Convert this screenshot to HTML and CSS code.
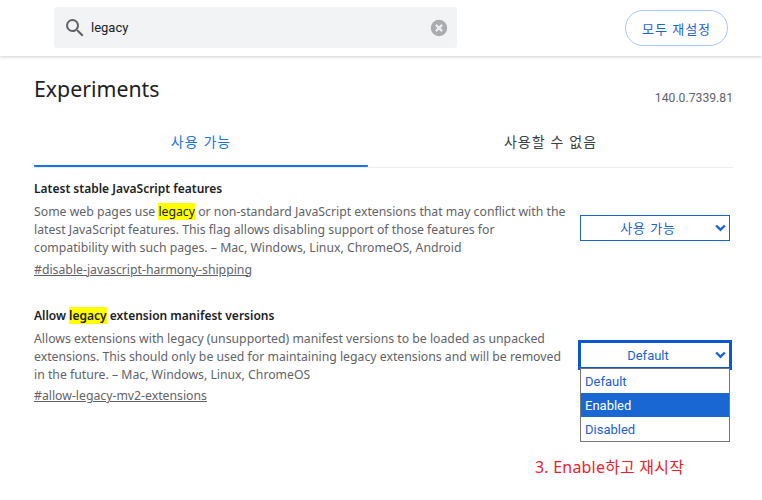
FILE: index.html
```html
<!DOCTYPE html>
<html lang="ko">
<head>
<meta charset="utf-8">
<title>Experiments</title>
<link rel="stylesheet" href="styles.css">
</head>
<body>
<header class="top">
  <div class="search">
    <svg class="search-icon" width="24" height="24" viewBox="0 0 24 24"><path d="M15.5 14h-.79l-.28-.27A6.47 6.47 0 0 0 16 9.5 6.5 6.5 0 1 0 9.5 16c1.61 0 3.09-.59 4.23-1.57l.27.28v.79l5 4.99L20.49 19l-4.99-5zm-6 0C7.01 14 5 11.99 5 9.5S7.01 5 9.5 5 14 7.01 14 9.5 11.99 14 9.5 14z"/></svg>
    <span class="search-text">legacy</span>
    <svg class="clear-icon" width="18" height="18" viewBox="0 0 18 18"><circle cx="9" cy="9" r="8.2"/><path d="M5.9 5.9l6.2 6.2M12.1 5.9l-6.2 6.2"/></svg>
  </div>
  <button class="reset">모두 재설정</button>
</header>
<main class="content">
  <div class="title-row">
    <h1 class="title">Experiments</h1>
    <span class="version">140.0.7339.81</span>
  </div>
  <div class="tabs">
    <div class="tab active">사용 가능</div>
    <div class="tab">사용할 수 없음</div>
  </div>
  <section class="exp exp-first">
    <div class="exp-text">
      <h2 class="exp-name">Latest stable JavaScript features</h2>
      <p class="exp-desc">Some web pages use <mark>legacy</mark> or non-standard JavaScript extensions that may conflict with the latest JavaScript features. This flag allows disabling support of those features for compatibility with such pages. – Mac, Windows, Linux, ChromeOS, Android</p>
      <a class="exp-link">#disable-javascript-harmony-shipping</a>
    </div>
    <div class="select-wrap">
      <div class="select">
        <span>사용 가능</span>
        <svg class="chev" width="11" height="8" viewBox="0 0 11 8"><path d="M1.2 1.5L5.5 5.8l4.3-4.3"/></svg>
      </div>
    </div>
  </section>
  <section class="exp exp-second">
    <div class="exp-text">
      <h2 class="exp-name">Allow <mark>legacy</mark> extension manifest versions</h2>
      <p class="exp-desc">Allows extensions with legacy (unsupported) manifest versions to be loaded as unpacked extensions. This should only be used for maintaining legacy extensions and will be removed in the future. – Mac, Windows, Linux, ChromeOS</p>
      <a class="exp-link">#allow-legacy-mv2-extensions</a>
    </div>
    <div class="select-wrap">
      <div class="select open">
        <span>Default</span>
        <svg class="chev" width="11" height="8" viewBox="0 0 11 8"><path d="M1.2 1.5L5.5 5.8l4.3-4.3"/></svg>
      </div>
      <ul class="menu">
        <li>Default</li>
        <li class="selected">Enabled</li>
        <li>Disabled</li>
      </ul>
      <div class="note">3. Enable하고 재시작</div>
    </div>
  </section>
</main>
</body>
</html>
```

FILE: styles.css
```css
* { box-sizing: border-box; }
html, body { margin: 0; height: 100%; }
body {
  width: 762px;
  height: 500px;
  overflow: hidden;
  background: #fff;
  color: #202124;
  font-family: "Noto Sans", "Noto Sans CJK KR", sans-serif;
}
.top {
  height: 56px;
  display: flex;
  align-items: center;
  padding: 0 34px 0 54px;
  justify-content: space-between;
  box-shadow: 0 1px 3px rgba(60, 64, 67, .25);
}
.search {
  width: 403px;
  height: 41px;
  margin-top: -1px;
  display: flex;
  align-items: center;
  background: #f1f3f4;
  border-radius: 3px;
  padding: 0 9px;
}
.search-icon { fill: #5f6368; flex: none; }
.search-text {
  flex: 1;
  margin-left: 4px;
  font: 13px "Roboto", sans-serif;
  color: #202124;
}
.clear-icon { flex: none; }
.clear-icon circle { fill: #a9abae; }
.clear-icon path { stroke: #eceef0; stroke-width: 2.2; fill: none; }
.reset {
  width: 103px;
  height: 36px;
  background: #fff;
  border: 1px solid #a8c7fa;
  border-radius: 18px;
  color: #1a62d6;
  font: 13px "Noto Sans CJK KR", sans-serif;
  letter-spacing: .9px;
  padding: 0;
}
.content { padding: 0 29px 0 34px; }
.title-row {
  display: flex;
  justify-content: space-between;
  align-items: flex-end;
  height: 49px;
}
.title {
  margin: 0 0 1px;
  font-weight: 400;
  font-size: 21.3px;
  line-height: 30px;
  color: #202124;
}
.version {
  font: 12.2px/16px "Roboto", sans-serif;
  color: #5f6368;
  margin-bottom: -1px;
}
.tabs {
  display: grid;
  grid-template-columns: 334px 1fr;
  margin-top: 13px;
  border-bottom: 1px solid #eceded;
  height: 50px;
}
.tab {
  font: 14px/47px "Noto Sans CJK KR", sans-serif;
  letter-spacing: 1px;
  text-align: center;
  color: #3c4043;
  height: 49px;
}
.tab.active {
  color: #1a73e8;
  border-bottom: 2px solid #1a73e8;
  border-radius: 1px;
}
.exp {
  display: flex;
  justify-content: space-between;
}
.exp-first { margin-top: 11px; height: 126.6px; }
.exp-text { width: 534px; }
.exp-name {
  margin: 0 0 4px;
  font-size: 12px;
  font-weight: 600;
  line-height: 20px;
  color: #202124;
}
.exp-desc {
  margin: 0;
  font-size: 12.25px;
  line-height: 18.2px;
  color: #5f6368;
}
.exp-link {
  display: block;
  margin-top: 3px;
  font-size: 12.25px;
  line-height: 18px;
  color: #5f6368;
  text-decoration: underline;
}
mark { background: #ff0; color: #202124; }
.select-wrap { width: 150px; margin-right: 3px; position: relative; }
.exp-first .select-wrap { margin-top: 36px; }
.exp-second .select-wrap { margin-top: 36px; }
.select {
  height: 26px;
  border: 1px solid #1a62d6;
  display: flex;
  align-items: center;
  justify-content: center;
  padding: 0 14px 2px 0;
  position: relative;
  color: #1a62d6;
  font: 13px "Noto Sans CJK KR", "Roboto", sans-serif;
  letter-spacing: .8px;
  background: #fff;
}
.chev {
  position: absolute;
  right: 3px;
  top: 8px;
  fill: none;
  stroke: #1a62d6;
  stroke-width: 2.4;
}
.select.open {
  height: 30px;
  margin: -2px -2px 0;
  border: 3px solid #0b57d0;
  padding: 1px 14px 0 0;
  font-family: "Roboto", sans-serif;
  font-size: 13px;
  letter-spacing: 0;
}
.select.open .chev { top: 8px; right: 3px; }
.menu {
  position: absolute;
  top: 26px;
  left: 0;
  width: 150px;
  margin: 0;
  padding: 0;
  list-style: none;
  border: 1px solid #767676;
  background: #fff;
  font: 13px/25px "Roboto", sans-serif;
  color: #1a62d6;
}
.menu li { padding-left: 4px; height: 24px; }
.menu .selected { background: #1967d2; color: #fff; }
.note {
  position: absolute;
  top: 112px;
  left: -45px;
  white-space: nowrap;
  color: #f01c2c;
  font: 16px "Noto Sans", "Noto Sans CJK KR", sans-serif;
  letter-spacing: .2px;
}
```
